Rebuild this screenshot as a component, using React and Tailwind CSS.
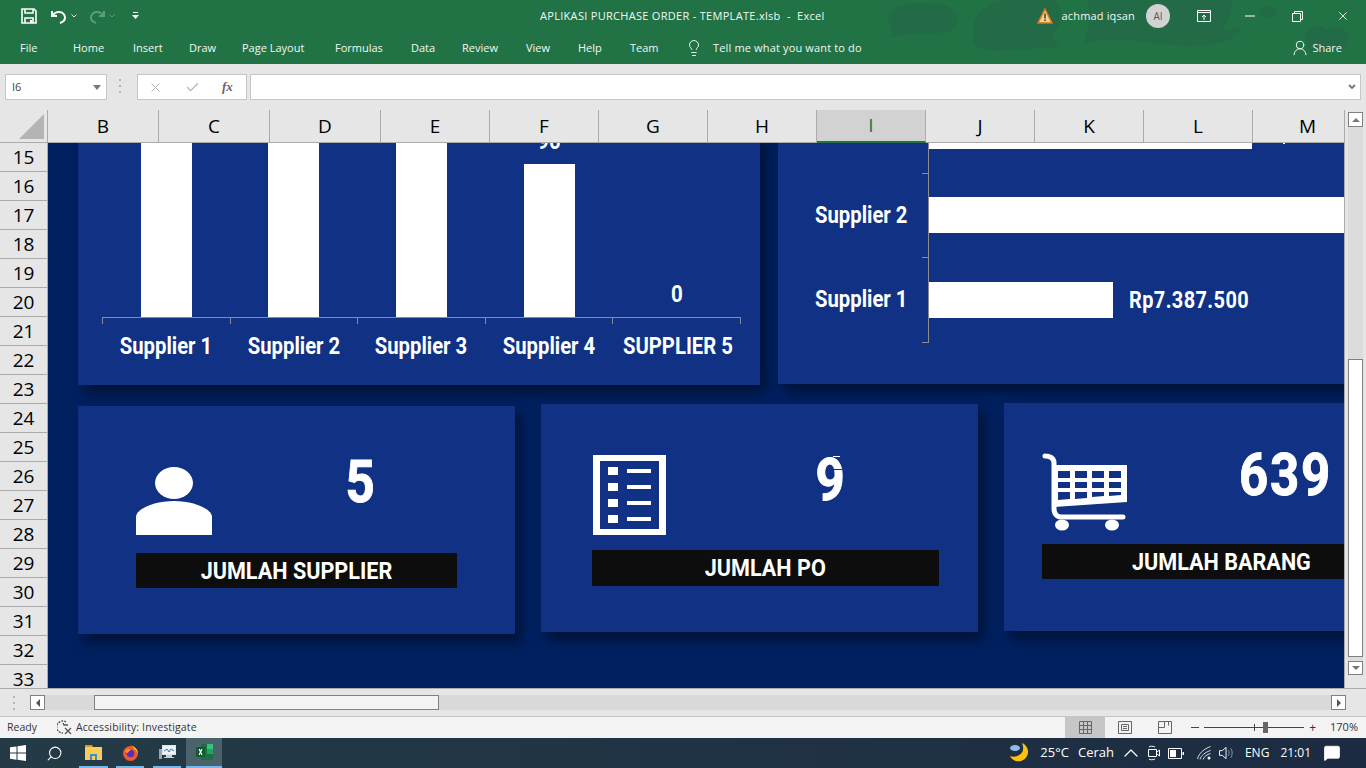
import { ChevronUp, MessageSquare, Search, UserRound, X, Check, Lightbulb } from 'lucide-react';

const tabs = [
  ['Home', 'w-[33px]'], ['Insert', 'w-[29px]'], ['Draw', 'w-[26px]'], ['Page Layout', 'w-[66px]'], ['Formulas', 'w-[49px]'],
  ['Data', 'w-[24px]'], ['Review', 'w-[37px]'], ['View', 'w-[25px]'], ['Help', 'w-[25px]'], ['Team', 'w-[28px]'],
];

const columns = [
  ['B', 'w-[111px]'], ['C', 'w-[111px]'], ['D', 'w-[111px]'], ['E', 'w-[109px]'], ['F', 'w-[109px]'], ['G', 'w-[109px]'],
  ['H', 'w-[109px]'], ['I', 'w-[109px]'], ['J', 'w-[109px]'], ['K', 'w-[109px]'], ['L', 'w-[109px]'], ['M', 'w-[92px] pl-[18px]'],
];

const rows = [15, 16, 17, 18, 19, 20, 21, 22, 23, 24, 25, 26, 27, 28, 29, 30, 31, 32, 33];

function TitleBar() {
  return (
    <div className="relative z-10 flex h-8 items-center text-white">
      <svg className="ml-[21px] h-[16px] w-[16px]" viewBox="0 0 16 16" fill="none" stroke="white" strokeWidth="1.6">
        <path d="M1 1h12l2 2v12H1z" />
        <path d="M4 1v4h8V1M4 15v-5h8v5" />
        <path d="M9 12h2v3H9z" fill="white" stroke="none" />
      </svg>
      <svg className="ml-[14px] h-[15px] w-[16px]" viewBox="0 0 16 15" fill="none" stroke="white" strokeWidth="2">
        <path d="M1 2v5h5M1.500 7C3 4 5 3 8 3c4 0 6 3 6 5.500S12 13 9 14" />
      </svg>
      <svg className="ml-[4px] h-[4px] w-[6px]" viewBox="0 0 6 4" fill="none" stroke="#d7e6dd"><path d="M.5.5L3 3 5.500.5" /></svg>
      <svg className="ml-[12px] h-[15px] w-[16px]" viewBox="0 0 16 15" fill="none" stroke="#5f9c7d" strokeWidth="2">
        <path d="M15 2v5h-5M14.500 7C13 4 11 3 8 3c-4 0-6 3-6 5.500S4 13 7 14" />
      </svg>
      <svg className="ml-[4px] h-[4px] w-[6px]" viewBox="0 0 6 4" fill="none" stroke="#5f9c7d"><path d="M.5.5L3 3 5.500.5" /></svg>
      <svg className="ml-[17px] h-[8px] w-[7px]" viewBox="0 0 7 8" fill="white">
        <path d="M1 0h5v1H1zM0 3h7L3.500 7z" />
      </svg>
      <span className="ml-[401px] whitespace-nowrap text-[11px] tracking-[0.3px] text-[#f2f7f4]">APLIKASI PURCHASE ORDER - TEMPLATE.xlsb&nbsp; - &nbsp;Excel</span>
    </div>
  );
}

function HeaderBackground() {
  return (
    <svg className="absolute left-0 top-0 h-16 w-[1366px]" viewBox="0 0 1366 64" fill="#236a47">
      <path d="M887 37C895 34 892 30 889 22C885 8 900 3 925 3C950 3 962 12 957 25C954 32 940 34 920 33C905 33 895 37 887 37z" />
      <path d="M973 42C976 34 968 20 985 8C990 3 1000 0 1010 0L1055 0C1064 10 1062 24 1052 34C1054 40 1058 44 1060 47C1040 47 1000 52 985 50C978 48 974 46 973 42z" />
      <path d="M1082 44C1090 30 1092 10 1086 0L1233 0C1232 10 1228 22 1222 30L1241 28C1240 36 1225 44 1200 46C1170 47 1150 42 1130 40C1110 38 1095 40 1082 44z" />
      <ellipse cx="1268" cy="12" rx="8" ry="6" />
      <path d="M1306 34c3-8 14-10 20-4 7-6 20-4 22 7 1 9-4 13-12 15l-22 0c-7-4-10-10-8-18z" />
    </svg>
  );
}

function Tabs() {
  return (
    <div className="relative z-10 flex h-8 items-center whitespace-nowrap text-[11px] text-[#f2f7f4]">
      <span className="ml-[20px] mr-[8px] w-[18px]">File</span>
      {tabs.map(([name, width]) => (
        <span key={name} className={`ml-[27px] ${width}`}>{name}</span>
      ))}
      <Lightbulb className="ml-[27px] h-[18px] w-[18px]" strokeWidth={1.300} />
      <span className="ml-[10px] tracking-[0.15px]">Tell me what you want to do</span>
      <span className="flex-1" />
      <UserRound className="h-[18px] w-[18px]" strokeWidth={1.300} />
      <span className="ml-[3px] mr-[24px]">Share</span>
    </div>
  );
}

function WindowControls() {
  return (
    <div className="absolute right-0 top-0 z-10 flex h-8 items-center text-white">
      <svg className="mr-[9px] h-[16px] w-[16px]" viewBox="0 0 16 16">
        <path d="M8 1l7 14H1z" fill="#f5d28a" stroke="#d9721d" strokeWidth="1.500" />
        <path d="M7.300 5.500h1.400v5H7.300zM7.300 11.500h1.400V13H7.300z" fill="#333" />
      </svg>
      <span className="text-[11px] tracking-[0.15px] text-[#f2f7f4]">achmad iqsan</span>
      <span className="ml-[11px] flex h-[24px] w-[24px] items-center justify-center rounded-full bg-[#d2d2d2] text-[10px] text-[#555]">AI</span>
      <svg className="ml-[27px] h-[14px] w-[14px]" viewBox="0 0 14 14" fill="none" stroke="white">
        <path d="M.5 1.500h13v11H.5zM.5 3.500h13M7 11V6M5 8l2-2 2 2" />
      </svg>
      <svg className="ml-[34px] h-[10px] w-[10px]" viewBox="0 0 10 10" fill="none" stroke="white"><path d="M0 5h10" /></svg>
      <svg className="ml-[37px] h-[11px] w-[11px]" viewBox="0 0 11 11" fill="none" stroke="white"><path d="M.5 2.500h8v8h-8zM2.500 2V.5h8v8H9" /></svg>
      <X className="ml-[33px] mr-[16px] h-[14px] w-[14px]" strokeWidth={1.400} />
    </div>
  );
}

function FormulaBar() {
  return (
    <div className="flex h-[46px] items-start bg-[#e6e6e6] pt-[10px] text-[11px] text-[#444]">
      <div className="ml-[5px] flex h-[26px] w-[102px] items-center justify-between border border-[#c6c6c6] bg-white pl-[6px] pr-[5px]">
        <span>I6</span>
        <span className="h-0 w-0 border-x-[4px] border-t-[5px] border-x-transparent border-t-[#777]" />
      </div>
      <div className="ml-[12px] mt-[5px] flex h-[14px] w-[2px] flex-col justify-between">
        <span className="h-[2px] bg-[#b5b5b5]" />
        <span className="h-[2px] bg-[#b5b5b5]" />
        <span className="h-[2px] bg-[#b5b5b5]" />
      </div>
      <div className="ml-[16px] flex h-[26px] w-[110px] items-center border border-[#c6c6c6] bg-white pl-[10px]">
        <X className="h-[15px] w-[15px] text-[#b3b3b3]" strokeWidth={1.600} />
        <Check className="ml-[22px] h-[15px] w-[15px] text-[#b3b3b3]" strokeWidth={2} />
        <span className="ml-[22px] font-['Liberation_Serif',serif] text-[13px] font-bold italic text-[#666]">fx</span>
      </div>
      <div className="ml-[3px] flex h-[26px] w-[1111px] items-center justify-end border border-[#c6c6c6] bg-white pr-[4px]">
        <svg className="h-[6px] w-[8px]" viewBox="0 0 8 6" fill="none" stroke="#777" strokeWidth="1.800"><path d="M1 1l3 3 3-3" /></svg>
      </div>
    </div>
  );
}

function ColumnHeaders() {
  return (
    <div className="flex h-[33px] bg-[#e6e6e6]">
      <div className="flex w-[48px] items-start border-b border-r border-[#ababab] pl-[19px] pt-[4px]">
        <span className="h-[25px] w-[25px] bg-[#b4b4b4] [clip-path:polygon(100%_0,100%_100%,0_100%)]" />
      </div>
      {columns.map(([name, width]) => (
        <div
          key={name}
          className={`${width} flex items-center justify-center border-b border-r border-[#ababab] text-[19px] leading-none ${name === 'I' ? 'border-b-2 border-b-[#217346] bg-[#d2d2d2] text-[#217346]' : 'text-black'}`}
        >
          {name}
        </div>
      ))}
      <div className="flex flex-1 flex-col items-center pt-[2px]">
        <span className="flex h-[15px] w-[15px] items-center justify-center border border-[#808080] bg-white">
          <span className="h-0 w-0 border-x-[4px] border-b-[4px] border-x-transparent border-b-[#777]" />
        </span>
        <span className="w-[15px] flex-1 bg-[#dcdcdc]" />
      </div>
    </div>
  );
}

function RowHeaders() {
  return (
    <div className="h-[545px] w-[48px] overflow-hidden border-r border-[#ababab] bg-[#e6e6e6]">
      {rows.map((row) => (
        <div key={row} className="flex h-[29px] items-center justify-center border-b border-[#ababab] text-[19px] leading-none text-black">
          {row}
        </div>
      ))}
    </div>
  );
}

const chartText = "font-['Roboto',sans-serif] font-bold text-white";

function LeftChart() {
  const bars = [
    ['left-[63px]', 'h-[174px]'],
    ['left-[190px]', 'h-[174px]'],
    ['left-[318px]', 'h-[174px]'],
    ['left-[446px]', 'h-[153px]'],
  ];
  const ticks = ['left-[24px]', 'left-[152px]', 'left-[279px]', 'left-[407px]', 'left-[534px]', 'left-[662px]'];
  const labels = [
    ['Supplier 1', 'left-[24px]'], ['Supplier 2', 'left-[152px]'], ['Supplier 3', 'left-[279px]'],
    ['Supplier 4', 'left-[407px]'], ['SUPPLIER 5', 'left-[535px]'],
  ];
  return (
    <div className="absolute left-[30px] top-[-10px] h-[252px] w-[682px] bg-[#103184] shadow-[6px_8px_12px_rgba(0,0,0,0.45)]">
      {bars.map(([left, height]) => (
        <div key={left} className={`absolute bottom-[68px] w-[51px] bg-white ${left} ${height}`} />
      ))}
      <div className="absolute left-[24px] top-[184px] h-px w-[639px] bg-[#8b8b8b]" />
      {ticks.map((left) => (
        <div key={left} className={`absolute top-[184px] h-[7px] w-px bg-[#8b8b8b] ${left}`} />
      ))}
      {labels.map(([label, left]) => (
        <span key={label} className={`${chartText} absolute top-[200px] w-[128px] origin-center scale-x-[0.845] whitespace-nowrap text-center text-[24px] leading-[26px] ${left}`}>
          {label}
        </span>
      ))}
      <span className={`${chartText} absolute left-[535px] top-[148px] w-[128px] scale-x-[0.855] text-center text-[24px] leading-[26px]`}>0</span>
      <span className={`${chartText} absolute left-[407px] top-[-5px] w-[128px] scale-x-[0.855] text-center text-[24px] leading-[26px]`}>90</span>
    </div>
  );
}

function RightChart() {
  return (
    <div className="absolute left-[730px] top-[-10px] h-[251px] w-[600px] bg-[#103184] shadow-[6px_8px_12px_rgba(0,0,0,0.45)]">
      <div className="absolute left-[150px] top-0 h-[210px] w-px bg-[#8b8b8b]" />
      <div className="absolute left-[144px] top-[40px] h-px w-[6px] bg-[#8b8b8b]" />
      <div className="absolute left-[144px] top-[124px] h-px w-[6px] bg-[#8b8b8b]" />
      <div className="absolute left-[144px] top-[209px] h-px w-[6px] bg-[#8b8b8b]" />
      <div className="absolute left-[151px] top-0 h-[16px] w-[323px] bg-white" />
      <div className="absolute left-[151px] top-[64px] h-[36px] w-[449px] bg-white" />
      <div className="absolute left-[151px] top-[149px] h-[36px] w-[184px] bg-white" />
      <span className={`${chartText} absolute left-[37px] top-[69px] w-[106px] origin-left scale-x-[0.845] whitespace-nowrap text-[24px] leading-[26px]`}>Supplier 2</span>
      <span className={`${chartText} absolute left-[37px] top-[153px] w-[106px] origin-left scale-x-[0.845] whitespace-nowrap text-[24px] leading-[26px]`}>Supplier 1</span>
      <span className={`${chartText} absolute left-[351px] top-[154px] origin-left scale-x-[0.83] whitespace-nowrap text-[24px] leading-[26px] tracking-[0.5px]`}>Rp7.387.500</span>
      <div className="absolute left-[505px] top-[10px] h-px w-[2px] bg-white" />
    </div>
  );
}

function SummaryCard({ position, children }) {
  return (
    <div className={`absolute h-[228px] bg-[#103184] shadow-[6px_8px_12px_rgba(0,0,0,0.45)] ${position}`}>
      {children}
    </div>
  );
}

function PersonIcon() {
  return (
    <svg className="absolute left-[58px] top-[61px] h-[68px] w-[76px]" viewBox="0 0 76 68" fill="white">
      <ellipse cx="38" cy="16" rx="19" ry="16" />
      <path d="M0 68V50c0-8 18-16 38-16s38 8 38 16v18z" />
    </svg>
  );
}

function ListIcon() {
  return (
    <svg className="absolute left-[52px] top-[51px] h-[80px] w-[73px]" viewBox="0 0 73 80" fill="white">
      <path fillRule="evenodd" d="M0 0h73v80H0zM7 6v68h59V6z" />
      <path d="M15 12h10v8H15zM34 14h24v4H34zM15 28h10v8H15zM34 30h24v4H34zM15 44h10v8H15zM34 46h24v4H34zM15 60h10v8H15zM34 62h24v4H34z" />
    </svg>
  );
}

function CartIcon() {
  return (
    <svg className="absolute left-[38px] top-[50px] h-[78px] w-[86px]" viewBox="0 0 86 78" fill="none">
      <path d="M3 3c5 0 9 2 9 7v46c0 5 3 8 8 8h61" stroke="white" strokeWidth="5" strokeLinecap="round" />
      <path fillRule="evenodd" fill="white" d="M12 12h73v37l-73 5zM16 18v7h12v-7zM33 18v7h12v-7zM50 18v7h12v-7zM67 18v7h12v-7zM16 29v6h12v-6zM33 29v6h12v-6zM50 29v6h12v-6zM67 29v6h12v-6zM16 39v8l12-1v-7zM33 39v7l12-1v-6zM50 39v5l12-1v-4zM67 39v4l12-1v-3z" />
      <ellipse cx="20" cy="72" rx="7" ry="5.500" fill="white" />
      <ellipse cx="70" cy="72" rx="7" ry="5.500" fill="white" />
    </svg>
  );
}

function Sheet() {
  return (
    <div className="relative h-[545px] w-[1296px] overflow-hidden bg-[#002060]">
      <LeftChart />
      <RightChart />
      <SummaryCard position="left-[30px] top-[263px] w-[437px]">
        <PersonIcon />
        <span className={`${chartText} absolute left-[265px] top-[38px] scale-x-[0.85] text-[60px] leading-[76px] [-webkit-text-stroke:1px_white]`}>5</span>
        <div className={`${chartText} absolute left-[58px] top-[147px] flex h-[35px] w-[321px] items-center justify-center bg-[#0d0d0d] text-[24px]`}>
          <span className="scale-x-[0.9] whitespace-nowrap">JUMLAH SUPPLIER</span>
        </div>
      </SummaryCard>
      <SummaryCard position="left-[493px] top-[261px] w-[437px]">
        <ListIcon />
        <span className={`${chartText} absolute left-[272px] top-[38px] scale-x-[0.85] text-[60px] leading-[76px] [-webkit-text-stroke:1px_white]`}>9</span>
        <div className="absolute left-[288px] top-[65px] h-px w-[13px] bg-[#103184]" />
        <div className="absolute left-[292px] top-[52px] h-px w-[7px] bg-white" />
        <div className={`${chartText} absolute left-[51px] top-[146px] flex h-[36px] w-[347px] items-center justify-center bg-[#0d0d0d] text-[24px]`}>
          <span className="scale-x-[0.9] whitespace-nowrap">JUMLAH PO</span>
        </div>
      </SummaryCard>
      <SummaryCard position="left-[956px] top-[260px] w-[400px]">
        <CartIcon />
        <span className={`${chartText} absolute left-[235px] top-[34px] origin-left scale-x-[0.85] whitespace-nowrap text-[60px] leading-[76px] tracking-[2px] [-webkit-text-stroke:1px_white]`}>639</span>
        <div className={`${chartText} absolute left-[38px] top-[141px] flex h-[35px] w-[362px] items-center bg-[#0d0d0d] pl-[90px] pt-[1px] text-[24px]`}>
          <span className="origin-left scale-x-[0.9] whitespace-nowrap">JUMLAH BARANG</span>
        </div>
      </SummaryCard>
    </div>
  );
}

function VerticalScroll() {
  return (
    <div className="flex h-[545px] w-[22px] flex-col items-center border-l border-[#ababab] bg-[#e6e6e6]">
      <div className="relative h-[532px] w-[15px] bg-[#dcdcdc]">
        <div className="absolute left-0 top-[216px] h-[298px] w-[15px] border border-[#808080] bg-white" />
        <div className="absolute bottom-0 left-0 flex h-[14px] w-[15px] items-center justify-center border border-[#808080] bg-white">
          <span className="h-0 w-0 border-x-[4px] border-t-[4px] border-x-transparent border-t-[#777]" />
        </div>
      </div>
    </div>
  );
}

function HorizontalScroll() {
  return (
    <div className="flex h-[29px] items-center border-b border-t border-b-[#c6c6c6] border-t-[#ababab] bg-[#e6e6e6]">
      <div className="ml-[13px] flex h-[14px] w-[2px] flex-col justify-between">
        <span className="h-[2px] bg-[#b5b5b5]" />
        <span className="h-[2px] bg-[#b5b5b5]" />
        <span className="h-[2px] bg-[#b5b5b5]" />
      </div>
      <div className="ml-[15px] flex h-[15px] w-[1316px] bg-[#d9d9d9]">
        <span className="flex h-[15px] w-[15px] items-center justify-center border border-[#808080] bg-white">
          <span className="h-0 w-0 border-y-[4px] border-r-[4px] border-y-transparent border-r-[#555]" />
        </span>
        <span className="ml-[49px] h-[15px] w-[345px] border border-[#808080] bg-[#f3f3f3]" />
        <span className="ml-auto flex h-[15px] w-[15px] items-center justify-center border border-[#808080] bg-white">
          <span className="h-0 w-0 border-y-[4px] border-l-[4px] border-y-transparent border-l-[#555]" />
        </span>
      </div>
    </div>
  );
}

function StatusBar() {
  return (
    <div className="flex h-[21px] items-center bg-[#f3f3f3] text-[10.5px] text-[#333]">
      <span className="ml-[7px]">Ready</span>
      <svg className="ml-[20px] h-[16px] w-[17px]" viewBox="0 0 17 16" fill="none" stroke="#555" strokeWidth="1.300">
        <path d="M9 2a6 6 0 1 0-3 11" strokeDasharray="2 1" />
        <path d="M6 3l1 2h4M8 8l6 6M14 8l-6 6" />
      </svg>
      <span className="ml-[2px] tracking-[0.14px]">Accessibility: Investigate</span>
      <span className="flex-1" />
      <div className="flex h-[21px] w-[40px] items-center justify-center bg-[#c6c6c6]">
        <svg className="h-[13px] w-[13px]" viewBox="0 0 13 13" fill="none" stroke="#666"><path d="M.5.5h12v12H.5zM4.500.5v12M8.500.5v12M.5 4.500h12M.5 8.500h12" /></svg>
      </div>
      <div className="flex h-[21px] w-[40px] items-center justify-center">
        <svg className="h-[13px] w-[14px]" viewBox="0 0 14 13" fill="none" stroke="#666"><path d="M.5.5h13v12H.5zM3.500 3.500h7v6h-7zM5 5.500h4M5 7.500h4" /></svg>
      </div>
      <div className="flex h-[21px] w-[40px] items-center justify-center">
        <svg className="h-[13px] w-[14px]" viewBox="0 0 14 13" fill="none" stroke="#666"><path d="M.5.5h13v12H.5zM.5 6.500h6M6.500.5v6M10.500.5v4" /></svg>
      </div>
      <span className="ml-[6px] h-px w-[8px] bg-[#444]" />
      <div className="relative ml-[5px] h-px w-[100px] bg-[#444]">
        <span className="absolute left-[50px] top-[-3px] h-[7px] w-px bg-[#444]" />
        <span className="absolute left-[59px] top-[-5px] h-[11px] w-[5px] bg-[#666]" />
      </div>
      <span className="ml-[5px] text-[12px] leading-none">+</span>
      <span className="ml-[14px] mr-[8px] text-[11px]">170%</span>
    </div>
  );
}

function TaskbarIcons() {
  return (
    <>
      <svg className="ml-[10px] h-[16px] w-[16px]" viewBox="0 0 16 16" fill="white">
        <path d="M0 2.300l6.500-.9v6.200H0zM7.500 1.300L16 0v7.600H7.500zM0 8.500h6.500v6.200L0 13.800zM7.500 8.500H16V16l-8.500-1.200z" />
      </svg>
      <Search className="ml-[20px] h-[17px] w-[17px] -scale-x-100 text-white" strokeWidth={1.500} />
      <div className="ml-[16px] flex h-[30px] w-[29px] items-center justify-center border-b-2 border-[#76b9ed]">
        <svg className="h-[16px] w-[17px]" viewBox="0 0 17 16">
          <path d="M0 1h7l1 2h-8z" fill="#d89a2a" />
          <path d="M0 3h17v13H0z" fill="#f7ce58" />
          <path d="M5 10h7v6h-2v-4H7v4H5z" fill="#3a8ed6" />
        </svg>
      </div>
      <div className="ml-[8px] flex h-[30px] w-[28px] items-center justify-center border-b-2 border-[#76b9ed]">
        <svg className="h-[17px] w-[17px]" viewBox="0 0 17 17">
          <circle cx="8.500" cy="9.500" r="7.500" fill="#f0582b" />
          <path d="M8 1c4 1 8 4 8 9-1-3-3-5-4-5 0-2-2-3-4-4z" fill="#ffc31f" />
          <circle cx="8.500" cy="9.500" r="3.800" fill="#5b2fb5" />
          <path d="M3 7c2-2 4-2 6-1-2 1-3 2-3 3-1 0-2-1-3-2z" fill="#ff9a2e" />
        </svg>
      </div>
      <div className="ml-[9px] flex h-[30px] w-[28px] items-center justify-center border-b-2 border-[#76b9ed]">
        <svg className="h-[15px] w-[17px]" viewBox="0 0 17 15">
          <path d="M3 0h14v10H3z" fill="#dfe6ea" />
          <path d="M4 1h12v8H4z" fill="#eef3f6" />
          <path d="M5 6l3-2 2 3 2-3 3 2" fill="none" stroke="#2c7bc4" />
          <path d="M7 10h6v2h2v1H5v-1h2z" fill="#c9d1d6" />
          <path d="M0 4h3v10H0z" fill="#9aa6ad" />
        </svg>
      </div>
      <div className="ml-[5px] flex h-[30px] w-[36px] items-center justify-center border-b-2 border-[#76b9ed] bg-[#4a626c]">
        <svg className="h-[16px] w-[17px]" viewBox="0 0 17 16">
          <path d="M5 0h12v16H5z" fill="#1d6f42" />
          <path d="M11 0h6v5h-6z" fill="#33c481" />
          <path d="M11 5h6v5h-6z" fill="#21a366" />
          <path d="M0 3h9v10H0z" fill="#0e5c2f" />
          <path d="M2.500 5h1.300l.8 1.600L5.400 5h1.200L5.200 8l1.400 3H5.300l-.8-1.700-.8 1.700H2.500L3.900 8z" fill="white" />
        </svg>
      </div>
    </>
  );
}

function SystemTray() {
  return (
    <>
      <svg className="h-[20px] w-[20px]" viewBox="0 0 20 20">
        <path d="M13 0a9.500 9.500 0 1 1-12 13c5 2 12-1 13-6 .4-3-.2-5-1-7z" fill="#fdc20f" />
        <ellipse cx="6" cy="5" rx="5" ry="3" fill="#8fbbe6" />
      </svg>
      <span className="ml-[11px]">25°C</span>
      <span className="ml-[9px]">Cerah</span>
      <ChevronUp className="ml-[5px] h-[24px] w-[24px]" strokeWidth={1.200} />
      <svg className="ml-[5px] h-[16px] w-[12px]" viewBox="0 0 12 16" fill="none" stroke="white">
        <path d="M1 2c1-1 4-1 6 0M1 14c1 1 4 1 6 0" />
        <path d="M.5 4.500h8v7h-8zM9 7l2.500-2v6L9 9" />
      </svg>
      <svg className="ml-[8px] h-[11px] w-[16px]" viewBox="0 0 16 11">
        <path d="M.5.500h13v10H.5z" fill="none" stroke="white" />
        <path d="M2 2h6v7H2zM14.500 4H16v3h-1.500z" fill="white" />
      </svg>
      <svg className="ml-[13px] h-[14px] w-[14px]" viewBox="0 0 14 14" fill="none" stroke="#d7dde0">
        <path d="M.5 13C2 7 7 3 13.500.5M3 13.500c1-4 5-7 10.500-9M6 13.500c1-3 4-5 7.500-6" />
        <circle cx="12" cy="12" r="1.500" fill="white" stroke="none" />
      </svg>
      <svg className="ml-[8px] h-[14px] w-[16px]" viewBox="0 0 17 14" fill="none" stroke="white">
        <path d="M.5 4.500h3L7.500 1v12l-4-3.500h-3z" />
        <path d="M10 4c1 2 1 4 0 6M12.500 2c2 3 2 7 0 10" stroke="#8f9ba2" />
      </svg>
      <span className="ml-[10px] text-[12px]">ENG</span>
      <span className="ml-[11px] text-[12px]">21:01</span>
      <MessageSquare className="ml-[12px] mr-[25px] h-[18px] w-[18px] fill-white text-white" strokeWidth={1} />
    </>
  );
}

export default function App() {
  return (
    <div className="relative h-[768px] w-[1366px] overflow-hidden bg-[#e6e6e6] font-['Open_Sans',sans-serif]">
      <div className="relative h-16 bg-[#217346]">
        <HeaderBackground />
        <TitleBar />
        <Tabs />
        <WindowControls />
      </div>
      <FormulaBar />
      <ColumnHeaders />
      <div className="flex">
        <RowHeaders />
        <Sheet />
        <VerticalScroll />
      </div>
      <HorizontalScroll />
      <StatusBar />
      <div className="flex h-[30px] items-center bg-gradient-to-r from-[#243b46] to-[#1c2b42] text-[13px] text-white">
        <TaskbarIcons />
        <span className="flex-1" />
        <SystemTray />
      </div>
    </div>
  );
}
